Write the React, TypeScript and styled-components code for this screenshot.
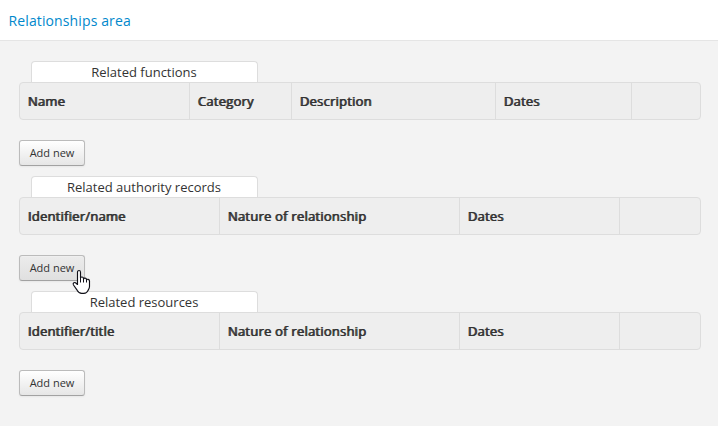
import React from "react";
import styled, { createGlobalStyle } from "styled-components";

const GlobalStyle = createGlobalStyle`
  * { box-sizing: border-box; }
  body {
    margin: 0;
    background: #f3f3f3;
    color: #333;
    font-family: "Open Sans", "Noto Sans", sans-serif;
    font-size: 13px;
  }
`;

const Page = styled.main`
  height: 426px;
  overflow: hidden;
  background: #f3f3f3;
`;

const AreaHeader = styled.h2`
  margin: 0;
  height: 41px;
  padding-left: 8.5px;
  border-bottom: 1px solid #e5e5e5;
  background: #fff;
  color: #0088cc;
  font-size: 14px;
  font-weight: 400;
  line-height: 41px;
  letter-spacing: 0.12px;
`;

const AreaBody = styled.div`
  padding: 20px 17px 0 19px;
`;

const Section = styled.section`
  height: 115px;
`;

const Caption = styled.div`
  width: 227px;
  height: 21px;
  margin-left: 12px;
  padding-right: 1px;
  border: 1px solid #ddd;
  border-bottom: 0;
  border-radius: 4px 4px 0 0;
  background: #fff;
  text-align: center;
  line-height: 20px;
`;

const HeadRow = styled.div<{ $columns: string }>`
  display: grid;
  grid-template-columns: ${(p) => p.$columns};
  height: 38px;
  border: 1px solid #ddd;
  border-radius: 4px;
  background: #eee;
`;

const HeadCell = styled.div`
  padding-left: 7.6px;
  font-weight: 400;
  -webkit-text-stroke: 0.15px #333;
  text-shadow: 0.8px 0 0 #333;
  line-height: 36px;
  letter-spacing: 0.23px;
  white-space: nowrap;

  & + & {
    border-left: 1px solid #ddd;
  }
`;

const ButtonSlot = styled.div`
  position: relative;
  width: 66px;
  margin-top: 20px;
`;

const AddButton = styled.button<{ $hovered?: boolean }>`
  display: block;
  width: 66px;
  height: 26px;
  padding: 0;
  border: 1px solid #bbb;
  border-bottom-color: #a2a2a2;
  border-radius: 3px;
  background: ${(p) =>
    p.$hovered
      ? "linear-gradient(#ececec, #e0e0e0)"
      : "linear-gradient(#ffffff, #e6e6e6)"};
  box-shadow: inset 0 1px 0 rgba(255, 255, 255, 0.2), 0 1px 2px rgba(0, 0, 0, 0.05);
  color: #333;
  font-family: inherit;
  font-size: 11px;
  line-height: 24px;
`;

const Pointer = styled.svg`
  position: absolute;
  left: 53px;
  top: 14px;
  z-index: 1;
`;

function HandPointer() {
  return (
    <Pointer width="19" height="26" viewBox="0 0 19 26" aria-hidden="true">
      <path
        d="M5.5 15.5V3.2C5.5 .9 8.5 .9 8.5 3.2V9C8.8 7.6 11.3 7.7 11.5 9.4V10C12 8.6 14.3 8.8 14.5 10.4V11C15.2 9.7 17.5 10.2 17.5 12V17.4C17.5 19.3 16.7 20.2 15.9 21.6C15.2 23.5 13.7 24.3 11.8 24.3H9.6C7.5 24.3 6.1 23 5.1 21.2L1.5 16C.5 14.4 2 13 3.5 13.7Z"
        fill="#fff"
        stroke="#101018"
        strokeWidth="1.15"
        strokeLinejoin="round"
      />
      <path
        d="M8.5 8.8V13.5M11.5 9.6V13.5M14.5 10.7V13.5"
        fill="none"
        stroke="#101018"
        strokeWidth="1"
      />
    </Pointer>
  );
}

const recordColumns = "199px 240px 160px 1fr";

const sections = [
  {
    title: "Related functions",
    columns: "169px 102px 204px 136px 1fr",
    heads: ["Name", "Category", "Description", "Dates", ""],
  },
  {
    title: "Related authority records",
    columns: recordColumns,
    heads: ["Identifier/name", "Nature of relationship", "Dates", ""],
    hovered: true,
  },
  {
    title: "Related resources",
    columns: recordColumns,
    heads: ["Identifier/title", "Nature of relationship", "Dates", ""],
  },
];

export default function App() {
  return (
    <Page>
      <GlobalStyle />
      <AreaHeader>Relationships area</AreaHeader>
      <AreaBody>
        {sections.map((s) => (
          <Section key={s.title}>
            <Caption>{s.title}</Caption>
            <HeadRow $columns={s.columns}>
              {s.heads.map((h, i) => (
                <HeadCell key={i}>{h}</HeadCell>
              ))}
            </HeadRow>
            <ButtonSlot>
              <AddButton type="button" $hovered={s.hovered}>
                Add new
              </AddButton>
              {s.hovered && <HandPointer />}
            </ButtonSlot>
          </Section>
        ))}
      </AreaBody>
    </Page>
  );
}
